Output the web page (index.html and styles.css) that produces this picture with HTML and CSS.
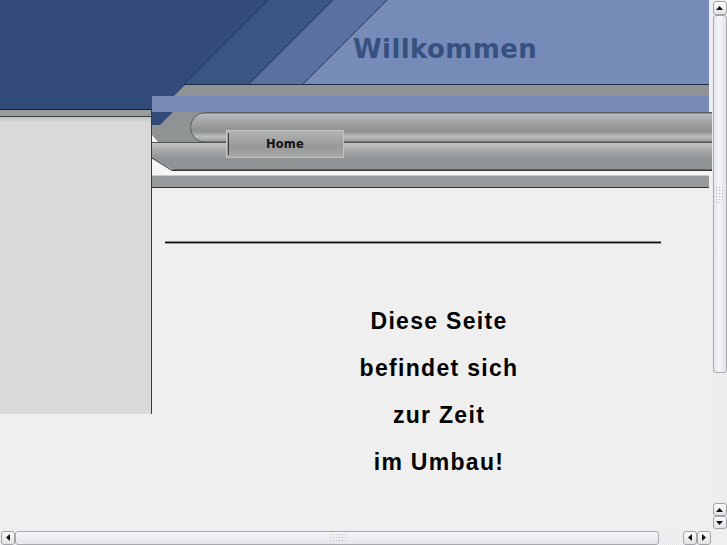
FILE: index.html
```html
<!DOCTYPE html>
<html lang="de">
<head>
<meta charset="utf-8">
<title>Willkommen</title>
<link rel="stylesheet" href="styles.css">
</head>
<body>
<div class="window">
  <div class="viewport">
    <header class="masthead">
      <svg class="art" viewBox="0 0 712 188" width="712" height="188" aria-hidden="true">
        <defs>
          <linearGradient id="pill" x1="0" y1="0" x2="0" y2="1">
            <stop offset="0" stop-color="#5d6161"/>
            <stop offset="0.06" stop-color="#b7b9b9"/>
            <stop offset="0.25" stop-color="#a9abab"/>
            <stop offset="0.5" stop-color="#949797"/>
            <stop offset="0.64" stop-color="#8f9292"/>
            <stop offset="0.8" stop-color="#bcbebe"/>
            <stop offset="0.93" stop-color="#a4a6a6"/>
            <stop offset="1" stop-color="#4d5050"/>
          </linearGradient>
          <linearGradient id="band" x1="0" y1="0" x2="0" y2="1">
            <stop offset="0" stop-color="#525555"/>
            <stop offset="0.05" stop-color="#c3c5c5"/>
            <stop offset="0.2" stop-color="#b2b4b4"/>
            <stop offset="0.45" stop-color="#9b9e9e"/>
            <stop offset="0.6" stop-color="#8f9393"/>
            <stop offset="0.96" stop-color="#8f9393"/>
            <stop offset="1" stop-color="#3d4040"/>
          </linearGradient>
          <linearGradient id="sidefill" x1="0" y1="0" x2="0" y2="1">
            <stop offset="0" stop-color="#c2c2c2"/>
            <stop offset="0.08" stop-color="#d9d9d9"/>
            <stop offset="1" stop-color="#d9d9d9"/>
          </linearGradient>
        </defs>
        <rect x="0" y="0" width="712" height="112" fill="#334b79"/>
        <polygon points="268,0 333,0 249,84 185,84" fill="#3a5483"/>
        <polygon points="333,0 387,0 303,84 249,84" fill="#5a71a0"/>
        <polygon points="387,0 712,0 712,84 303,84" fill="#778bb8"/>
        <g stroke="#22335a" stroke-width="1">
          <line x1="268" y1="0" x2="184" y2="84"/>
          <line x1="333" y1="0" x2="249" y2="84"/>
          <line x1="387" y1="0" x2="303" y2="84"/>
        </g>
        <line x1="185" y1="84.5" x2="712" y2="84.5" stroke="#1f2c48"/>
        <polygon points="185,85 712,85 712,96 174,96" fill="#909494"/>
        <rect x="152" y="96" width="560" height="16" fill="#778ab6"/>
        <rect x="709" y="0" width="3" height="112" fill="#eceef3"/>

        <rect x="0" y="109" width="151" height="1" fill="#222"/>
        <rect x="0" y="110" width="151" height="6" fill="#999c9c"/>
        <rect x="0" y="116" width="151" height="1" fill="#3a3a3a"/>
        <rect x="0" y="117" width="151" height="71" fill="url(#sidefill)"/>
        <rect x="151" y="109" width="1" height="79" fill="#3a3a3a"/>

        <rect x="152" y="112" width="560" height="58" fill="#8f9393"/>
        <polygon points="152,112 173,112 160,125 152,125" fill="#334b79"/>
        <polygon points="152,135 158,142 152,142" fill="#f4f4f4"/>
        <rect x="190.5" y="112.5" width="540" height="30" rx="15" fill="url(#pill)" stroke="#5a5e5e"/>
        <rect x="152" y="158" width="560" height="18" fill="#f6f6f6"/>
        <polygon points="152,142 712,142 712,170 173,170 152,158" fill="url(#band)"/>
        <line x1="152" y1="142.5" x2="712" y2="142.5" stroke="#4e5252"/>
        <polyline points="152,158 172,170.5 712,170.5" fill="none" stroke="#333636"/>
        <rect x="152" y="176" width="557" height="11" fill="#979a9a"/>
        <rect x="152" y="175" width="557" height="1" fill="#c9cbcb"/>
        <rect x="152" y="187" width="557" height="1" fill="#2f3232"/>
      </svg>
      <h1 class="title">Willkommen</h1>
      <nav class="nav"><a class="tab">Home</a></nav>
    </header>
    <div class="main">
      <aside class="side"></aside>
      <section class="content">
        <hr class="rule">
        <p class="notice">Diese Seite<br>befindet sich<br>zur Zeit<br>im Umbau!</p>
      </section>
    </div>
  </div>

  <div class="vscroll">
    <div class="sb-btn tall"><svg width="7" height="4" viewBox="0 0 7 4"><polygon points="3.5,0 7,4 0,4" fill="#111"/></svg></div>
    <div class="vthumb"><span class="grip vgrip"></span></div>
    <div class="track"></div>
    <div class="sb-btn short"><svg width="7" height="4" viewBox="0 0 7 4"><polygon points="3.5,0 7,4 0,4" fill="#111"/></svg></div>
    <div class="sb-btn short"><svg width="7" height="4" viewBox="0 0 7 4"><polygon points="0,0 7,0 3.5,4" fill="#111"/></svg></div>
  </div>
  <div class="hscroll">
    <div class="sb-btn wide"><svg width="4" height="7" viewBox="0 0 4 7"><polygon points="0,3.5 4,0 4,7" fill="#111"/></svg></div>
    <div class="hthumb"><span class="grip hgrip"></span></div>
    <div class="track"></div>
    <div class="sb-btn narrow"><svg width="4" height="7" viewBox="0 0 4 7"><polygon points="0,3.5 4,0 4,7" fill="#111"/></svg></div>
    <div class="sb-btn narrow"><svg width="4" height="7" viewBox="0 0 4 7"><polygon points="4,3.5 0,0 0,7" fill="#111"/></svg></div>
  </div>
  <div class="corner"></div>
</div>
</body>
</html>
```

FILE: styles.css
```css
* { box-sizing: border-box; }
html, body { margin: 0; padding: 0; }
body {
  width: 727px;
  height: 545px;
  overflow: hidden;
  background: #efefef;
  font-family: "Liberation Sans", Arial, sans-serif;
}
.window {
  display: grid;
  grid-template-columns: 712px 15px;
  grid-template-rows: 530px 15px;
  width: 727px;
  height: 545px;
}
.viewport {
  overflow: hidden;
  background: #efefef;
}
.masthead {
  position: relative;
  height: 188px;
}
.art {
  position: absolute;
  left: 0;
  top: 0;
  display: block;
}
.title {
  position: relative;
  margin: 0;
  padding: 36px 0 0 353px;
  font: bold 26px/26px "DejaVu Sans", sans-serif;
  letter-spacing: 0.4px;
  color: #36507f;
}
.nav {
  position: relative;
  margin: 68px 0 0 226px;
  width: 118px;
  height: 28px;
}
.tab {
  position: relative;
  display: flex;
  align-items: center;
  justify-content: center;
  height: 28px;
  padding-top: 1px;
  border: 1px solid #c2c4c4;
  background: linear-gradient(#b3b5b5, #a2a4a4 35%, #969999 60%, #a6a8a8);
  font: bold 11.5px/1 "DejaVu Sans", sans-serif;
  letter-spacing: 0.2px;
  color: #141414;
  cursor: pointer;
}
.tab::before {
  content: "";
  position: absolute;
  left: 1px;
  top: 2px;
  bottom: 2px;
  width: 1px;
  background: #3d3f3f;
}
.main {
  display: grid;
  grid-template-columns: 152px 1fr;
  align-items: start;
}
.side {
  height: 226px;
  background: #d9d9d9;
  border-right: 1px solid #3a3a3a;
}
.content {
  padding: 53px 0 0 13px;
}
.rule {
  width: 496px;
  height: 3px;
  margin: 0;
  border: 0;
  background: linear-gradient(#8a8a8a 0 1px, #111 1px 2px, #9a9a9a 2px);
}
.notice {
  margin: 54px 0 0;
  padding-left: 1px;
  text-align: center;
  font-weight: bold;
  font-size: 23px;
  letter-spacing: 1.3px;
  line-height: 47px;
  color: #000;
}

/* scrollbars */
.vscroll {
  display: flex;
  flex-direction: column;
  align-items: center;
  padding: 1px 0;
  background: #eeeef1;
}
.hscroll {
  display: flex;
  align-items: center;
  padding: 0 1px;
  background: #eeeef1;
}
.corner { background: #efefef; }
.sb-btn {
  flex: none;
  display: flex;
  align-items: center;
  justify-content: center;
  border: 1px solid #a3a3a7;
  border-radius: 3px;
  background: linear-gradient(#fbfbfc, #e3e3e7);
}
.tall { width: 14px; height: 14px; }
.short { width: 14px; height: 13px; }
.wide { width: 14px; height: 14px; }
.narrow { width: 14px; height: 14px; }
.vthumb {
  flex: none;
  width: 14px;
  height: 358px;
  display: flex;
  align-items: center;
  justify-content: center;
  border: 1px solid #a8a8ae;
  border-radius: 3px;
  background: linear-gradient(to right, #e4e6ec, #f4f5f8 45%, #e2e4ea);
}
.hthumb {
  flex: none;
  width: 644px;
  height: 14px;
  display: flex;
  align-items: center;
  justify-content: center;
  border: 1px solid #a8a8ae;
  border-radius: 3px;
  background: linear-gradient(#f4f5f8, #e4e6ec);
}
.grip {
  display: block;
  background-image: radial-gradient(circle, #b9b9c0 0.7px, transparent 0.9px);
  background-size: 3px 3px;
}
.vgrip { width: 9px; height: 17px; }
.hgrip { width: 17px; height: 9px; }
.track {
  flex: 1;
  align-self: stretch;
  background: repeating-conic-gradient(#e4e4e6 0 25%, #f7f7f8 0 50%) 0 0 / 2px 2px;
}
```
